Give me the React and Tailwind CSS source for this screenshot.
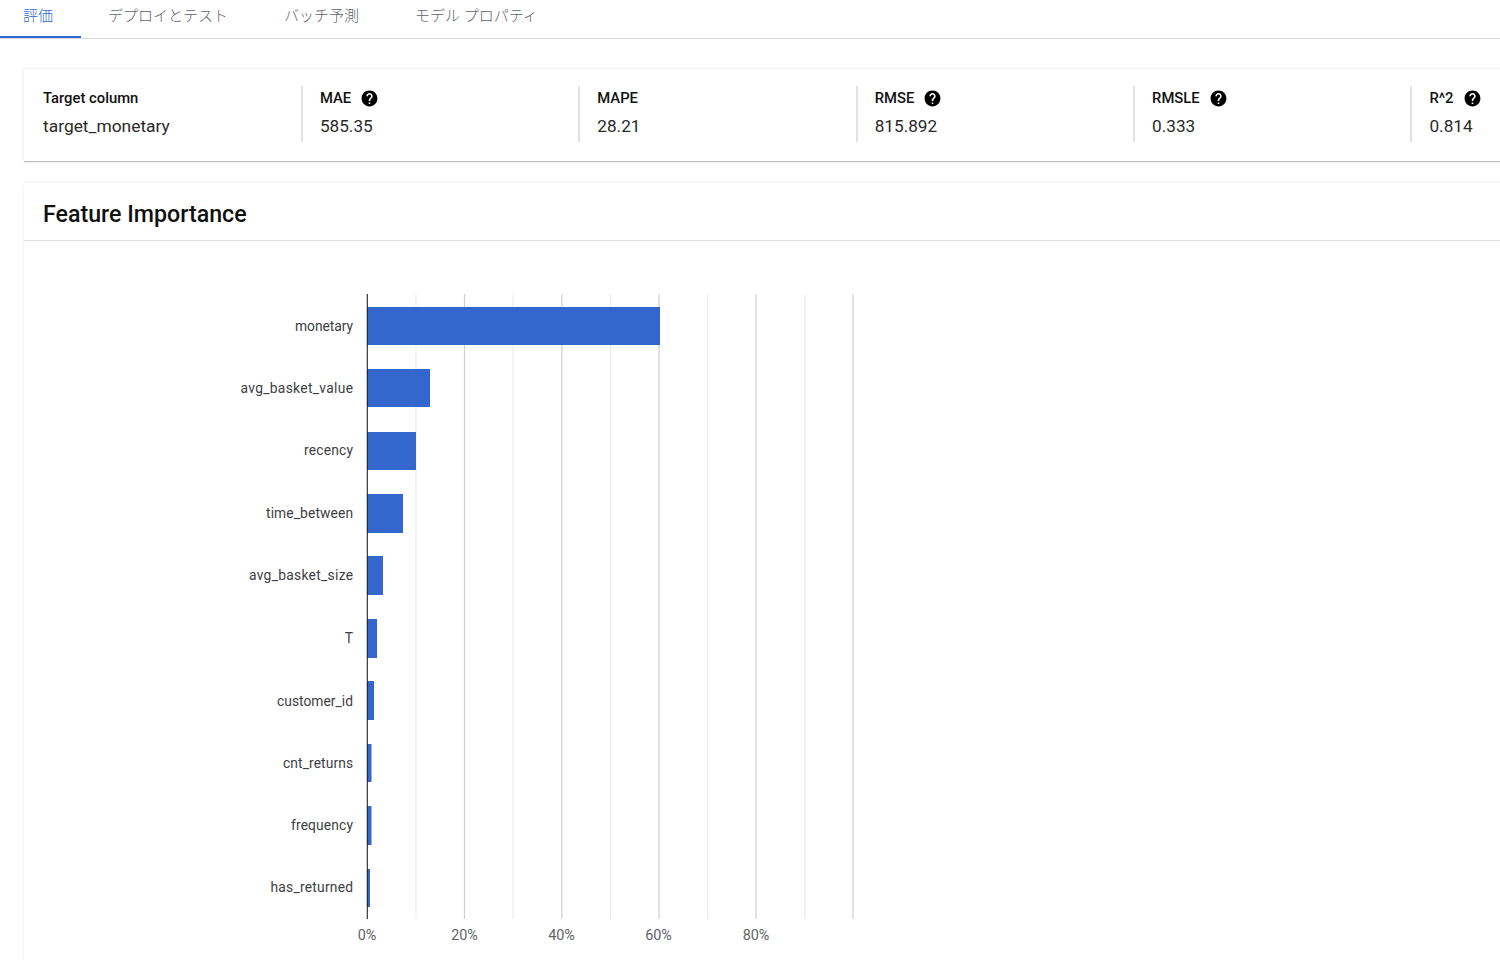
const tabs = ["デプロイとテスト", "バッチ予測", "モデル プロパティ"];
const font = { fontFamily: '"Roboto", "Noto Sans CJK JP", sans-serif' };

const metrics = [
  { label: "MAE", value: "585.35", help: true },
  { label: "MAPE", value: "28.21" },
  { label: "RMSE", value: "815.892", help: true },
  { label: "RMSLE", value: "0.333", help: true },
  { label: "R^2", value: "0.814", help: true },
];

const bars = [
  ["monetary", 307, 38, 660, 58, 331],
  ["avg_basket_value", 369, 38, 430, 112.5, 393],
  ["recency", 432, 38, 416, 49, 455],
  ["time_between", 494, 39, 403, 87, 518],
  ["avg_basket_size", 556, 39, 383, 104, 580],
  ["T", 619, 39, 377, 8, 643],
  ["customer_id", 681, 39, 374, 76, 706],
  ["cnt_returns", 744, 38, 371.5, 70, 768],
  ["frequency", 806, 39, 371.5, 62, 830],
  ["has_returned", 869, 38, 370, 82.5, 892],
];

const grid = [416, 464.5, 513, 561.8, 610.5, 659, 707.5, 756, 805, 853];
const ticks = [["0%", 367], ["20%", 464.5], ["40%", 561.5], ["60%", 658.5], ["80%", 756]];

function Help() {
  return (
    <svg width="19" height="19" viewBox="0 0 24 24" className="shrink-0" fill="#000">
      <path d="M12 2C6.48 2 2 6.48 2 12s4.48 10 10 10 10-4.48 10-10S17.52 2 12 2zm1 17h-2v-2h2v2zm2.07-7.75l-.9.92C13.45 12.9 13 13.5 13 15h-2v-.5c0-1.1.45-2.1 1.17-2.83l1.24-1.26c.37-.36.59-.86.59-1.41 0-1.1-.9-2-2-2s-2 .9-2 2H8c0-2.21 1.79-4 4-4s4 1.79 4 4c0 .88-.36 1.68-.93 2.25z" />
    </svg>
  );
}

function Metric({ label, value, help }) {
  return (
    <div className="w-[277.4px] shrink-0 h-14 border-l-2 border-[#e3e3e3] pl-[17px] flex flex-col">
      <div className="h-6 flex items-center gap-[9px] text-[14.8px] font-medium text-[#111] leading-6">
        <span>{label}</span>
        {help && <Help />}
      </div>
      <div className="mt-[4px] text-[17.2px] leading-6 text-[#2a2a2a]">{value}</div>
    </div>
  );
}

export default function App() {
  return (
    <div className="w-[1500px] h-[960px] overflow-hidden bg-white" style={font}>
      <div className="h-[39px] flex border-b border-[#d9dadc] text-[15px] font-light text-[#5f6368]">
        <div className="h-[38px] w-[81px] mr-[-1px] pl-[23px] pt-[5px] border-b-2 border-[#3367d6] text-[#3367d6]">評価</div>
        {tabs.map((t) => (
          <div key={t} className="h-[38px] px-7 pt-[5px] whitespace-nowrap">{t}</div>
        ))}
      </div>

      <div className="ml-6 mt-[30px] w-[1600px] h-[93px] pt-[17px] pl-[19px] flex bg-white border-b border-[#b9b9b9] shadow-[0_0_3px_rgba(0,0,0,0.12)]">
        <div className="w-[257.9px] shrink-0 flex flex-col">
          <div className="h-6 text-[14.8px] font-medium text-[#111] leading-6">Target column</div>
          <div className="mt-[4px] text-[17.4px] leading-6 text-[#2a2a2a]">target_monetary</div>
        </div>
        {metrics.map((m) => (
          <Metric key={m.label} {...m} />
        ))}
      </div>

      <div className="ml-6 mt-[21px] w-[1600px] h-[800px] bg-white rounded-tl-[4px] shadow-[0_0_3px_rgba(0,0,0,0.1)]">
        <div className="h-[58px] border-b border-[#dedede] pl-[19px] pt-[13px] text-[23.2px] leading-[36px] font-medium text-[#111]">
          Feature Importance
        </div>
        <svg width="1476" height="719" viewBox="24 241 1476 719" className="block" style={font}>
          {grid.map((x, i) => (
            <line key={x} x1={x} x2={x} y1="294" y2="919" stroke={i % 2 ? "#cfcfcf" : "#ececec"} strokeWidth="1.2" />
          ))}
          {bars.map(([name, y, h, end, len, base]) => (
            <g key={name}>
              <rect x="367" y={y} width={end - 367} height={h} fill="#3367ce" />
              <text x="353" y={base} textAnchor="end" fontSize="13.8" fill="#3c4043" textLength={len}>{name}</text>
            </g>
          ))}
          <line x1="367.3" x2="367.3" y1="294" y2="919" stroke="#222" strokeWidth="1.1" />
          {ticks.map(([t, x]) => (
            <text key={t} x={x} y="940" textAnchor="middle" fontSize="14.4" fill="#5f6368">{t}</text>
          ))}
        </svg>
      </div>
    </div>
  );
}
